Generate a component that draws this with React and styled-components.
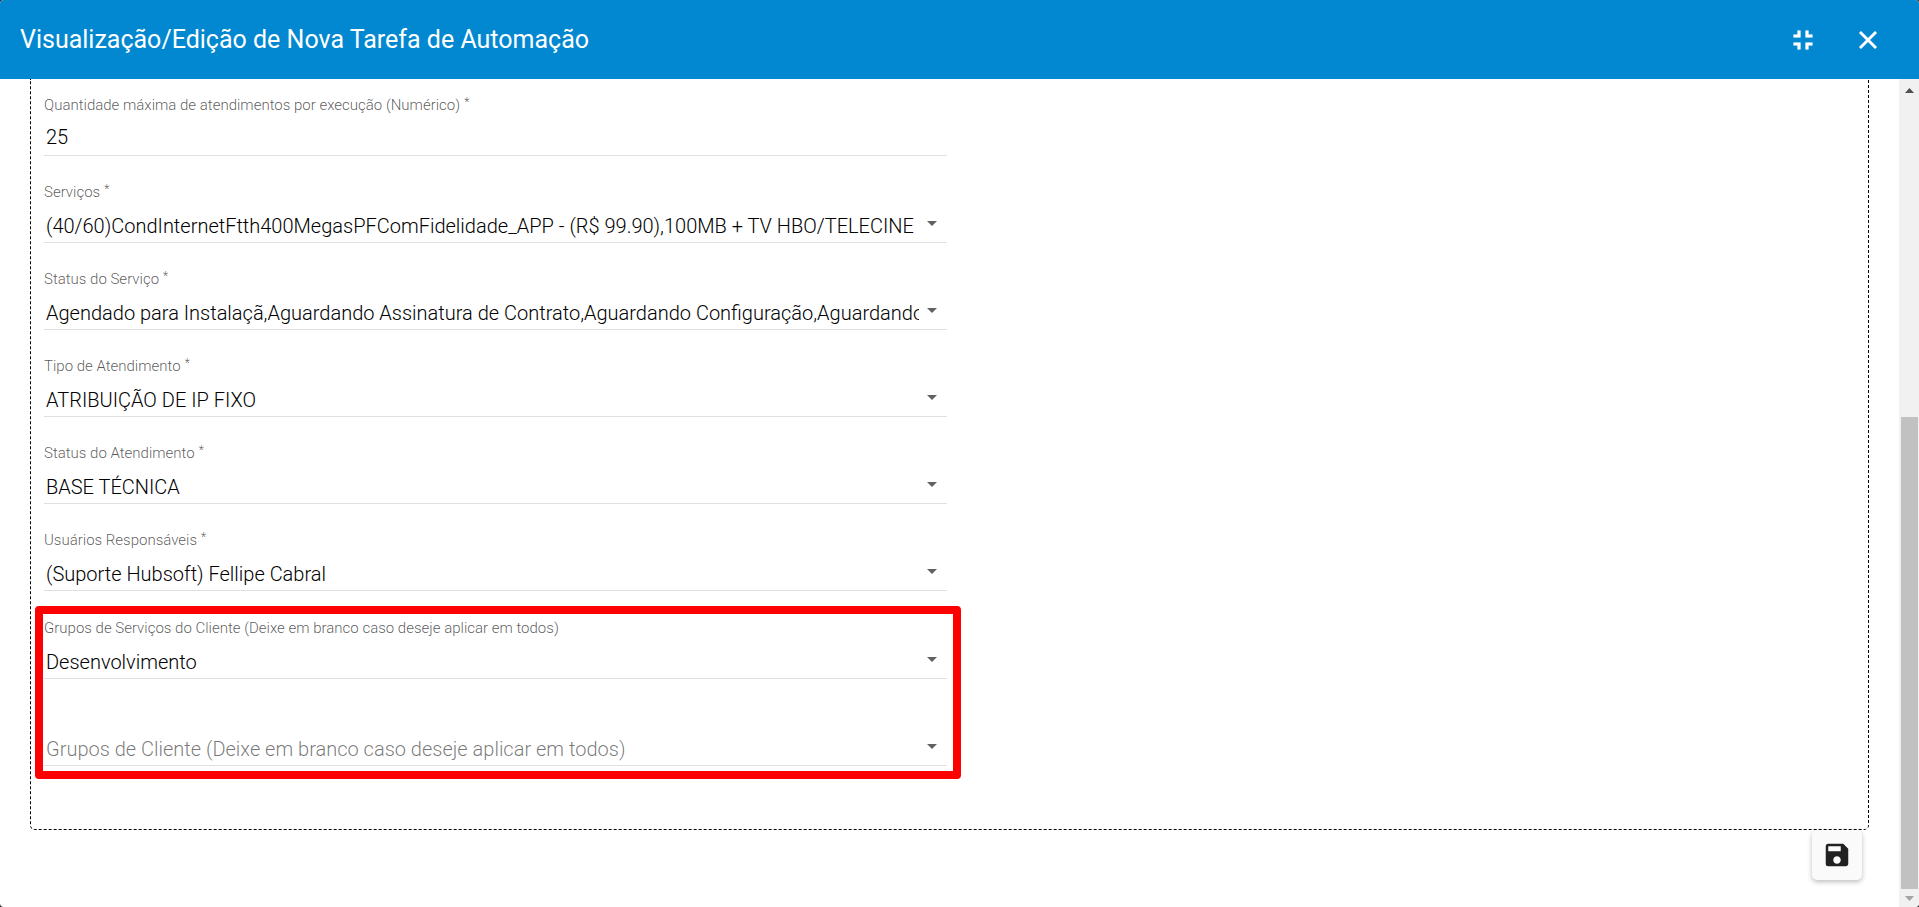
import React from 'react'
import styled, { createGlobalStyle } from 'styled-components'
import { MdSave } from 'react-icons/md'

const servicoFields = [
    { id: 'servicos', label: 'Serviços', required: true, value: '(40/60)CondInternetFtth400MegasPFComFidelidade_APP - (R$ 99.90),100MB + TV HBO/TELECINE' },
    { id: 'status-servico', label: 'Status do Serviço', required: true, value: 'Agendado para Instalaçã,Aguardando Assinatura de Contrato,Aguardando Configuração,Aguardando Instalação' },
    { id: 'tipo-atendimento', label: 'Tipo de Atendimento', required: true, value: 'ATRIBUIÇÃO DE IP FIXO' },
    { id: 'status-atendimento', label: 'Status do Atendimento', required: true, value: 'BASE TÉCNICA' },
    { id: 'usuarios', label: 'Usuários Responsáveis', required: true, value: '(Suporte Hubsoft) Fellipe Cabral' },
]

const grupoFields = [
    { id: 'grupos-servico', label: 'Grupos de Serviços do Cliente (Deixe em branco caso deseje aplicar em todos)', value: 'Desenvolvimento' },
    { id: 'grupos-cliente', placeholder: 'Grupos de Cliente (Deixe em branco caso deseje aplicar em todos)' },
]

const SelectField = ({ id, label, required, value, placeholder }) => (
    <Field>
        <Label htmlFor={id}>
            {label}
            {required && <Required>*</Required>}
        </Label>
        <Control>
            <Select id={id} aria-label={placeholder} $empty={!value} defaultValue={value || ''}>
                {value ? <option>{value}</option> : <option value="">{placeholder}</option>}
            </Select>
            <Arrow viewBox="0 0 10 5" aria-hidden="true">
                <path d="M0 0h10L5 5z" />
            </Arrow>
        </Control>
    </Field>
)

const App = () => (
    <>
        <GlobalStyle />
        <Dialog>
            <Toolbar>
                <Title>Visualização/Edição de Nova Tarefa de Automação</Title>
                <IconButton aria-label="Restaurar">
                    <ToolbarIcon viewBox="0 0 24 24" $size={32}>
                        <path d="M5 16h3v3h2v-5H5v2zm3-8H5v2h5V5H8v3zm6 11h2v-3h3v-2h-5v5zm2-11V5h-2v5h5V8h-3z" />
                    </ToolbarIcon>
                </IconButton>
                <IconButton aria-label="Fechar">
                    <ToolbarIcon viewBox="0 0 24 24" $size={30}>
                        <path d="M19 6.410 17.590 5 12 10.590 6.410 5 5 6.410 10.590 12 5 17.590 6.410 19 12 13.410 17.590 19 19 17.590 13.410 12z" />
                    </ToolbarIcon>
                </IconButton>
            </Toolbar>
            <Body>
                <Content>
                    <Panel>
                        <Column>
                            <Field>
                                <Label htmlFor="quantidade">
                                    Quantidade máxima de atendimentos por execução (Numérico)
                                    <Required>*</Required>
                                </Label>
                                <Control>
                                    <Input id="quantidade" defaultValue="25" />
                                </Control>
                            </Field>
                            {servicoFields.map(f => <SelectField key={f.id} {...f} />)}
                            <Highlight>
                                {grupoFields.map(f => <SelectField key={f.id} {...f} />)}
                            </Highlight>
                        </Column>
                    </Panel>
                    <SaveButton aria-label="Salvar"><MdSave size={30} /></SaveButton>
                </Content>
                <Scrollbar aria-hidden="true">
                    <ScrollArrow viewBox="0 0 20 17"><path d="M6 14h9L10.500 9z" fill="#505050" /></ScrollArrow>
                    <Track>
                        <Thumb />
                    </Track>
                    <ScrollArrow viewBox="0 0 20 17"><path d="M6 6h9l-4.500 5z" fill="#a3a3a3" /></ScrollArrow>
                </Scrollbar>
            </Body>
        </Dialog>
    </>
)
export default App

const GlobalStyle = createGlobalStyle`
    * {
        box-sizing:border-box;
    }
    body {
        margin:0;
        background:#333;
        font-family:Roboto, sans-serif;
    }
`
const Dialog = styled.main`
    display:flex;
    flex-direction:column;
    height:100vh;
    overflow:hidden;
    border-radius:4px;
    background:#fff;
`
const Toolbar = styled.header`
    display:flex;
    align-items:center;
    flex:none;
    height:79px;
    padding:0 19px 0 20px;
    background:#0288d1;
    color:#fff;
`
const Title = styled.h1`
    flex:1;
    margin:0;
    font-size:25px;
    font-weight:400;
`
const IconButton = styled.button`
    display:flex;
    align-items:center;
    justify-content:center;
    width:65px;
    height:48px;
    padding:0;
    border:0;
    background:none;
    color:inherit;
`
const ToolbarIcon = styled.svg`
    width:${p => p.$size}px;
    height:${p => p.$size}px;
    fill:currentColor;
    stroke:currentColor;
    stroke-width:.4;
    stroke-linejoin:round;
`
const Body = styled.div`
    display:flex;
    flex:1;
    min-height:0;
`
const Content = styled.form`
    display:flex;
    flex-direction:column;
    flex:1;
    min-width:0;
    overflow:hidden;
    padding:0 30px;
`
const Panel = styled.section`
    padding:17px 0 63px;
    border:1px dashed #000;
    border-top:0;
    border-radius:0 0 5px 5px;
`
const Column = styled.div`
    display:flex;
    flex-direction:column;
    gap:27px;
    width:50%;
    padding:0 3px 0 13px;
`
const Field = styled.div`
    display:flex;
    flex-direction:column;
`
const Label = styled.label`
    height:18px;
    color:rgba(0,0,0,.66);
    font-size:15px;
    font-weight:300;
    line-height:18px;
    white-space:nowrap;
`
const Required = styled.span`
    margin-left:4px;
    font-size:12px;
    line-height:12px;
    vertical-align:top;
`
const Control = styled.div`
    display:flex;
    align-items:center;
    height:42px;
    padding:4px 10px 0 2px;
    border-bottom:1px solid #e0e0e0;
`
const Input = styled.input`
    flex:1;
    min-width:0;
    height:36px;
    padding:0;
    border:0;
    outline:0;
    background:none;
    color:#000;
    font:300 20px Roboto, sans-serif;
`
const Select = styled.select`
    flex:1;
    min-width:0;
    height:36px;
    margin-right:8px;
    padding:4px 0 0;
    border:0;
    outline:0;
    appearance:none;
    overflow:hidden;
    background:none;
    color:${p => p.$empty ? 'rgba(0,0,0,.54)' : '#000'};
    font:300 20px Roboto, sans-serif;
    opacity:1;
`
const Arrow = styled.svg`
    flex:none;
    width:10px;
    height:5px;
    fill:#616161;
`
// marks the client group filters
const Highlight = styled.div`
    display:flex;
    flex-direction:column;
    gap:27px;
    position:relative;
    margin-top:1px;
    &::after {
        content:'';
        position:absolute;
        top:-13px;
        right:-14px;
        bottom:-13px;
        left:-9px;
        border:8px solid #f00;
        border-radius:4px;
        pointer-events:none;
    }
`
const SaveButton = styled.button`
    display:flex;
    align-items:center;
    justify-content:center;
    align-self:flex-end;
    flex:none;
    width:50px;
    height:50px;
    margin-right:7px;
    padding:0;
    border:0;
    border-radius:5px;
    background:#fafafa;
    color:#212121;
    box-shadow:0 2px 5px rgba(0,0,0,.26);
`
const Scrollbar = styled.div`
    display:flex;
    flex-direction:column;
    flex:none;
    width:20px;
    background:#f1f1f1;
`
const ScrollArrow = styled.svg`
    flex:none;
    width:20px;
    height:17px;
`
const Track = styled.div`
    display:flex;
    flex-direction:column;
    justify-content:flex-end;
    flex:1;
    padding:0 1px 1px 2px;
`
const Thumb = styled.div`
    flex:0 0 59.5%;
    background:#c1c1c1;
`
